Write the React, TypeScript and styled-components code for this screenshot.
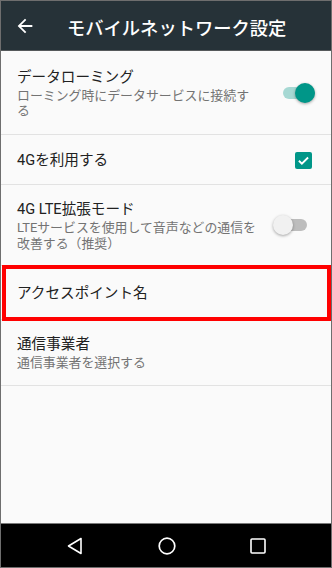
import React from "react";
import styled, { createGlobalStyle } from "styled-components";

const Global = createGlobalStyle`
  html, body { margin: 0; padding: 0; background: #fafafa; }
  body { font-family: Roboto, "Noto Sans CJK JP", sans-serif; }
`;

const Frame = styled.div`
  width: 332px;
  height: 568px;
  box-sizing: border-box;
  border: 1px solid #6e6e6e;
  display: flex;
  flex-direction: column;
  background: #fafafa;
  overflow: hidden;
`;

const Toolbar = styled.header`
  height: 49px;
  flex: none;
  background: #263238;
  display: flex;
  align-items: center;
  border-bottom: 1px solid #55595b;
`;

const BackButton = styled.div`
  width: 22px;
  height: 22px;
  margin-left: 13px;
  margin-top: 1px;
  display: flex;
`;

const Title = styled.h1`
  margin: 0 0 0 31px;
  padding-top: 2px;
  color: #ffffff;
  font-size: 18.3px;
  font-weight: 500;
  letter-spacing: 0;
  font-family: Roboto, "Noto Sans CJK JP", sans-serif;
`;

const List = styled.main`
  flex: 1;
  display: flex;
  flex-direction: column;
`;

const Row = styled.div<{ $h: number; $highlight?: boolean }>`
  position: relative;
  height: ${(p) => p.$h}px;
  flex: none;
  display: flex;
  align-items: center;
  padding: 0 16px;
  border-bottom: 1px solid #e2e2e2;
  &::after {
    content: "";
    display: ${(p) => (p.$highlight ? "block" : "none")};
    position: absolute;
    left: 1px;
    right: 0px;
    top: -1px;
    bottom: -2px;
    border: 4px solid #ff0000;
    pointer-events: none;
  }
`;

const Texts = styled.div`
  flex: none;
  width: 244px;
  display: flex;
  flex-direction: column;
`;

const Primary = styled.div`
  color: #212121;
  font-size: 14.6px;
  line-height: 20px;
  white-space: nowrap;
`;

const Secondary = styled.div<{ $lh?: number }>`
  color: #737373;
  font-size: 12.9px;
  line-height: ${(p) => p.$lh ?? 16}px;
  margin-top: 1px;
`;

const Spacer = styled.div`
  flex: 1;
`;

const Switch = styled.div<{ $shift: number }>`
  position: relative;
  width: 32px;
  height: 20px;
  margin-right: ${(p) => p.$shift}px;
  flex: none;
  display: flex;
  align-items: center;
`;

const Track = styled.div<{ $on: boolean }>`
  width: 32px;
  height: 12px;
  border-radius: 6px;
  background: ${(p) => (p.$on ? "#a6d8d3" : "#bdbdbd")};
`;

const Thumb = styled.div<{ $on: boolean }>`
  position: absolute;
  top: 0;
  ${(p) => (p.$on ? "right: 0;" : "left: -2px;")}
  width: 20px;
  height: 20px;
  border-radius: 50%;
  background: ${(p) => (p.$on ? "#009688" : "#f1f1f1")};
  box-shadow: 0 1px 3px rgba(0, 0, 0, 0.35);
`;

const CheckBox = styled.div`
  width: 17px;
  height: 17px;
  margin-right: 3px;
  margin-top: 1px;
  border-radius: 2px;
  background: #009688;
  display: flex;
  align-items: center;
  justify-content: center;
`;

const NavBar = styled.nav`
  height: 43px;
  flex: none;
  background: #000000;
  border-top: 1px solid #7a7a7a;
  display: flex;
  align-items: center;
  justify-content: space-between;
  padding: 0 62px 0 64px;
`;

const NavIcon = styled.div`
  width: 22px;
  height: 22px;
  display: flex;
  align-items: center;
  justify-content: center;
`;

const ToggleSwitch = ({ on, shift }: { on: boolean; shift: number }) => (
  <Switch $shift={shift}>
    <Track $on={on} />
    <Thumb $on={on} />
  </Switch>
);

export default function App() {
  return (
    <>
      <Global />
      <Frame>
        <Toolbar>
          <BackButton>
            <svg width="22" height="22" viewBox="0 0 24 24">
              <path
                fill="#ffffff"
                d="M20 11H7.83l5.59-5.59L12 4l-8 8 8 8 1.41-1.41L7.83 13H20v-2z"
              />
            </svg>
          </BackButton>
          <Title>モバイルネットワーク設定</Title>
        </Toolbar>
        <List>
          <Row $h={83}>
            <Texts>
              <Primary>データローミング</Primary>
              <Secondary $lh={15}>ローミング時にデータサービスに接続する</Secondary>
            </Texts>
            <Spacer />
            <ToggleSwitch on shift={0} />
          </Row>
          <Row $h={49}>
            <Texts>
              <Primary>4Gを利用する</Primary>
            </Texts>
            <Spacer />
            <CheckBox>
              <svg width="13" height="13" viewBox="0 0 24 24">
                <path
                  fill="none"
                  stroke="#ffffff"
                  strokeWidth="3.4"
                  d="M3.5 12.5l5.5 5.5L20.5 6.5"
                />
              </svg>
            </CheckBox>
          </Row>
          <Row $h={80}>
            <Texts>
              <Primary>4G LTE拡張モード</Primary>
              <Secondary>LTEサービスを使用して音声などの通信を改善する（推奨）</Secondary>
            </Texts>
            <Spacer />
            <ToggleSwitch on={false} shift={8} />
          </Row>
          <Row $h={53} $highlight>
            <Texts>
              <Primary>アクセスポイント名</Primary>
            </Texts>
          </Row>
          <Row $h={65}>
            <Texts>
              <Primary>通信事業者</Primary>
              <Secondary>通信事業者を選択する</Secondary>
            </Texts>
          </Row>
        </List>
        <NavBar>
          <NavIcon>
            <svg width="22" height="22" viewBox="0 0 22 22">
              <path
                d="M16 3.5 L16 18.5 L3.5 11 Z"
                fill="none"
                stroke="#ffffff"
                strokeWidth="1.6"
                strokeLinejoin="round"
              />
            </svg>
          </NavIcon>
          <NavIcon>
            <svg width="22" height="22" viewBox="0 0 22 22">
              <circle cx="11" cy="11" r="7.8" fill="none" stroke="#ffffff" strokeWidth="1.7" />
            </svg>
          </NavIcon>
          <NavIcon>
            <svg width="22" height="22" viewBox="0 0 22 22">
              <rect x="4" y="4" width="14" height="14" rx="1" fill="none" stroke="#ffffff" strokeWidth="1.6" />
            </svg>
          </NavIcon>
        </NavBar>
      </Frame>
    </>
  );
}
